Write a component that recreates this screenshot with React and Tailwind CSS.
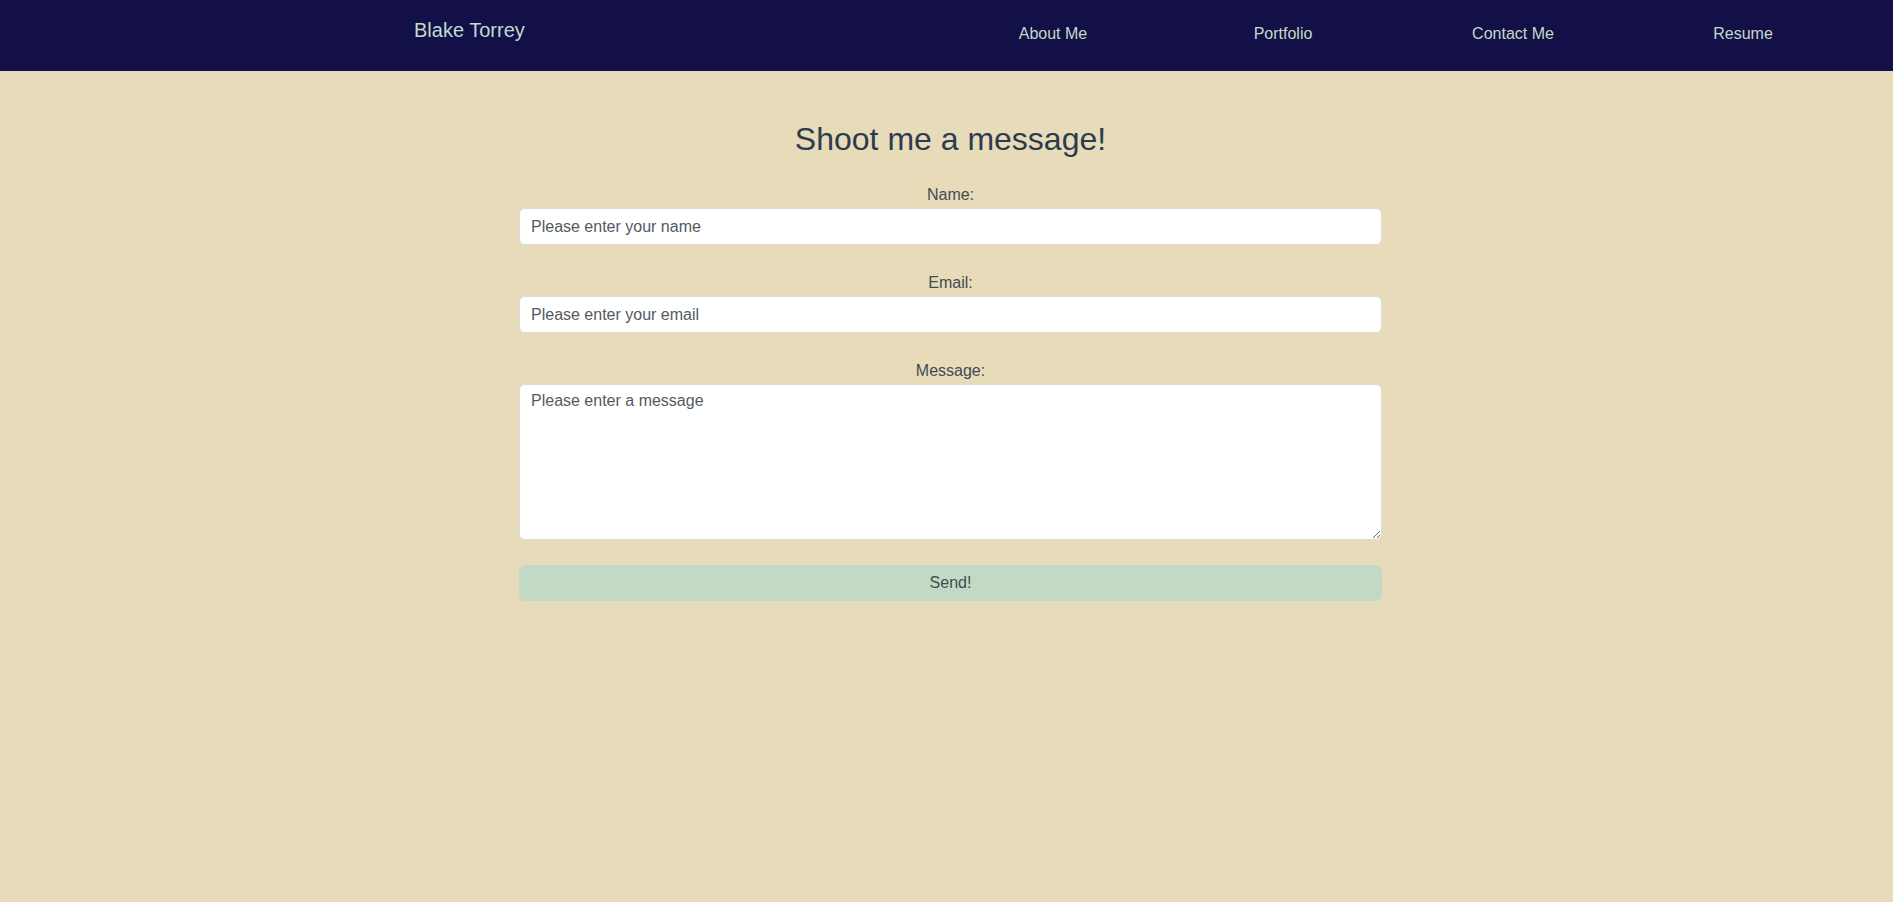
export default function App() {
  return (
    <div className="min-h-screen w-full bg-[#e8dbb9] font-['Liberation_Sans',Arial,sans-serif]">
      <header className="flex h-[71px] w-full bg-[#130f47]">
        <div className="ml-[414px] mt-[19px] text-[20px] leading-[23px] text-[#bfdccf]">
          Blake Torrey
        </div>
        <div className="flex-1" />
        <nav className="mr-[35px] mt-[25px] grid w-[920px] grid-cols-4 text-[16px] leading-[18px] text-[#c3dbc6]">
          <a className="text-center" href="#">About Me</a>
          <a className="text-center" href="#">Portfolio</a>
          <a className="text-center" href="#">Contact Me</a>
          <a className="text-center" href="#">Resume</a>
        </nav>
      </header>

      <main className="w-full pl-[8px]">
        <form className="mx-auto flex w-[863px] flex-col" onSubmit={(e) => e.preventDefault()}>
          <h1 className="mt-[50px] text-center text-[32px] leading-[37px] text-[#2b3c4e]">
            Shoot me a message!
          </h1>

          <label className="mt-[28px] block text-center text-[16px] leading-[18px] text-[#414b55]">
            Name:
          </label>
          <input
            type="text"
            placeholder="Please enter your name"
            className="mt-[4px] h-[37px] w-full rounded-[6px] border border-[#dddddd] bg-white px-[11px] text-[16px] text-[#4a4f55] outline-none placeholder:text-[#555a60]"
          />

          <label className="mt-[29px] block text-center text-[16px] leading-[18px] text-[#414b55]">
            Email:
          </label>
          <input
            type="email"
            placeholder="Please enter your email"
            className="mt-[4px] h-[37px] w-full rounded-[6px] border border-[#dddddd] bg-white px-[11px] text-[16px] text-[#4a4f55] outline-none placeholder:text-[#555a60]"
          />

          <label className="mt-[29px] block text-center text-[16px] leading-[18px] text-[#414b55]">
            Message:
          </label>
          <textarea
            placeholder="Please enter a message"
            className="mt-[4px] h-[156px] w-full rounded-[6px] border border-[#dddddd] bg-white px-[11px] py-[7px] text-[16px] leading-[18px] text-[#4a4f55] outline-none placeholder:text-[#555a60]"
          />

          <button
            type="submit"
            className="mt-[25px] h-[36px] w-full rounded-[6px] bg-[#c2dac5] text-center text-[16px] leading-[18px] text-[#3f4d52]"
          >
            Send!
          </button>
        </form>
      </main>
    </div>
  );
}
